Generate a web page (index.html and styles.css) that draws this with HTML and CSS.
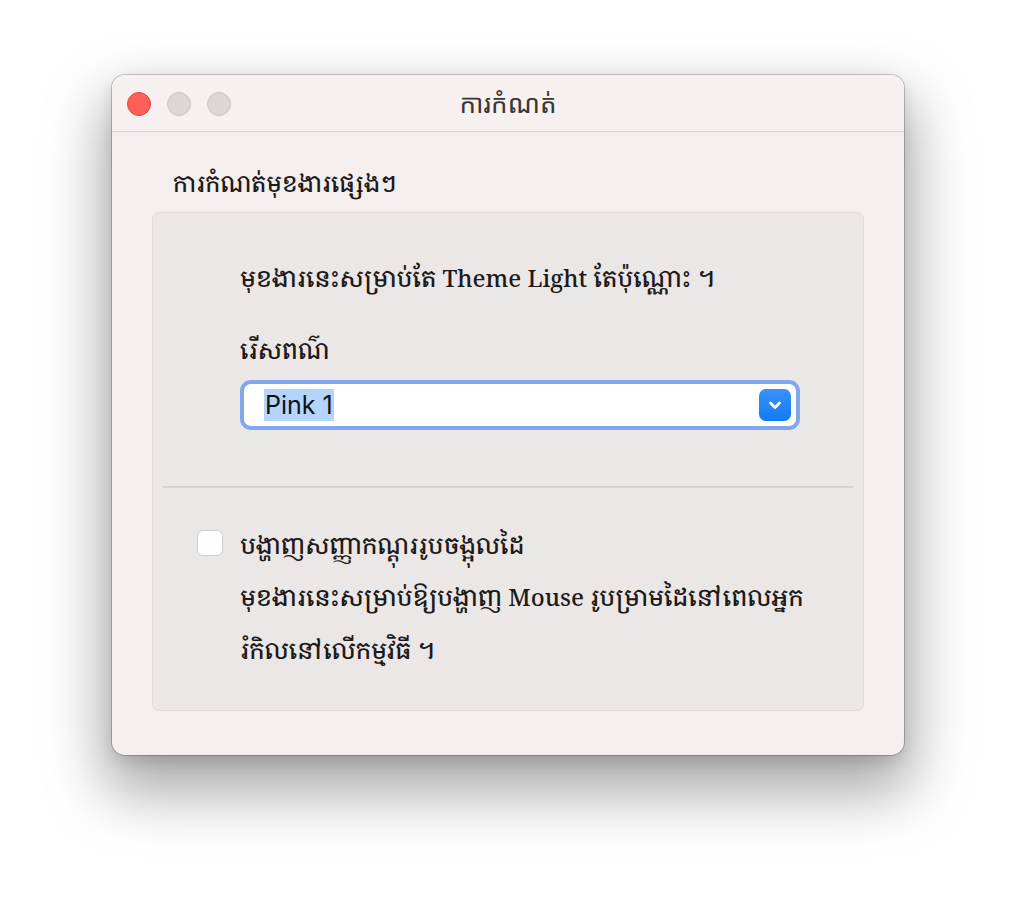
FILE: index.html
```html
<!DOCTYPE html>
<html lang="km">
<head>
<meta charset="utf-8">
<title>ការកំណត់</title>
<link rel="stylesheet" href="styles.css">
</head>
<body>
<div class="stage">
  <div class="window">
    <div class="titlebar">
      <div class="lights">
        <span class="light red"></span>
        <span class="light grey"></span>
        <span class="light grey"></span>
      </div>
      <div class="title">ការកំណត់</div>
    </div>
    <div class="content">
      <div class="heading">ការកំណត់មុខងារផ្សេងៗ</div>
      <div class="group">
        <div class="section">
          <p class="note">មុខងារនេះសម្រាប់តែ Theme Light តែប៉ុណ្ណោះ ។</p>
          <p class="label">រើសពណ៌</p>
          <div class="select">
            <span class="value">Pink 1</span>
            <span class="arrow">
              <svg width="18" height="14" viewBox="0 0 18 14"><path d="M4.5 5 L9 9.5 L13.5 5" fill="none" stroke="#fff" stroke-width="2.8" stroke-linecap="round" stroke-linejoin="round"/></svg>
            </span>
          </div>
        </div>
        <div class="divider"></div>
        <div class="checkrow">
          <span class="checkbox"></span>
          <div class="checktext">
            <p class="checklabel">បង្ហាញសញ្ញាកណ្ដុររូបចង្អុលដៃ</p>
            <p class="desc">មុខងារនេះសម្រាប់ឱ្យបង្ហាញ Mouse រូបម្រាមដៃនៅពេលអ្នក<br>រំកិលនៅលើកម្មវិធី ។</p>
          </div>
        </div>
      </div>
    </div>
  </div>
</div>
</body>
</html>
```

FILE: styles.css
```css
html, body {
  margin: 0;
  padding: 0;
  background: #ffffff;
}
body {
  width: 1016px;
  height: 904px;
  overflow: hidden;
  font-family: "Noto Serif Khmer", "Noto Sans Khmer", "Khmer OS", "Khmer OS System", "DejaVu Serif", "Noto Serif", "Liberation Serif", serif;
  color: #1c1a1a;
}
.stage {
  padding: 75px 0 0 112px;
}
.window {
  width: 792px;
  height: 680px;
  background: #f4eeee;
  border-radius: 13px;
  box-shadow: 0 0 0 1px rgba(0,0,0,0.2), 0 30px 60px 8px rgba(0,0,0,0.34), 0 6px 16px rgba(0,0,0,0.12);
  overflow: hidden;
}
.titlebar {
  height: 57px;
  border-bottom: 1px solid #d8d2d2;
  background: #f6f0f0;
  display: flex;
  align-items: center;
  position: relative;
  box-sizing: border-box;
}
.lights {
  display: flex;
  gap: 16px;
  padding-left: 15px;
  padding-top: 1px;
}
.light {
  width: 24px;
  height: 24px;
  border-radius: 50%;
  box-sizing: border-box;
}
.light.red {
  background: #fe5f58;
  border: 1px solid #e2463f;
}
.light.grey {
  background: #dcd6d6;
  border: 1px solid #cbc5c5;
}
.title {
  position: absolute;
  left: 0;
  right: 0;
  top: 0;
  line-height: 57px;
  text-align: center;
  font-size: 26px;
  color: #3a3636;
  font-family: "Noto Sans Khmer", "Noto Serif Khmer", "Noto Sans", sans-serif;
}
.content {
  padding: 34px 40px 0 40px;
}
.heading {
  font-size: 23.3px;
  line-height: 34px;
  padding-left: 21px;
  color: #1c1a1a;
  font-weight: 500;
}
.group {
  margin-top: 12px;
  height: 499px;
  box-sizing: border-box;
  background: #ebe7e6;
  border: 1px solid #e0dbdb;
  border-radius: 7px;
  padding: 0 10px;
}
.section {
  padding: 47px 0 0 77px;
  height: 273px;
  box-sizing: border-box;
}
.note, .label, .checklabel, .desc {
  margin: 0;
  font-size: 23.8px;
  line-height: 36px;
  font-weight: 500;
}
.label {
  margin-top: 36px;
}
.select {
  margin-top: 12px;
  width: 560px;
  height: 50px;
  box-sizing: border-box;
  border: 4px solid #82a8ec;
  border-radius: 11px;
  background: #ffffff;
  display: flex;
  align-items: center;
  justify-content: space-between;
  padding: 0 5px 0 20px;
}
.value {
  font-family: "Inter", "Liberation Sans", sans-serif;
  font-size: 25px;
  line-height: 32px;
  background: #b4d4fb;
  color: #111;
  padding: 0 1px;
}
.arrow {
  width: 32px;
  height: 32px;
  border-radius: 7px;
  background: linear-gradient(#3a92fb, #117af5);
  display: flex;
  align-items: center;
  justify-content: center;
}
.divider {
  height: 2px;
  background: #d6d2d2;
}
.checkrow {
  display: flex;
  align-items: flex-start;
  padding: 39px 0 0 34px;
  gap: 17px;
}
.checkbox {
  width: 26px;
  height: 26px;
  box-sizing: border-box;
  background: #ffffff;
  border: 1px solid #d2cdcd;
  border-radius: 6px;
  margin-top: 3px;
  flex: none;
}
.desc {
  margin-top: 8px;
  line-height: 53px;
}
```
